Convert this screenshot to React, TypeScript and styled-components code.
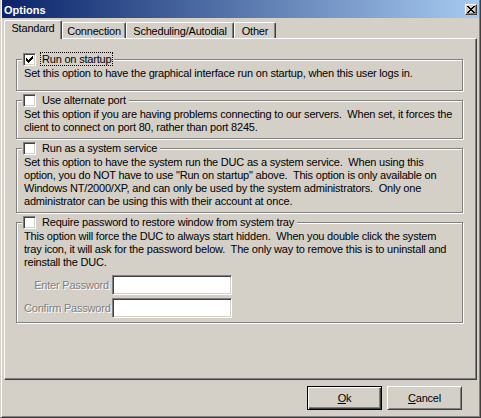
import React from "react";
import styled, { createGlobalStyle } from "styled-components";

const Global = createGlobalStyle`
  html, body { margin: 0; padding: 0; background: #D4D0C8; }
  * { box-sizing: border-box; }
`;

const Window = styled.div`
  width: 481px;
  height: 418px;
  background: #d4d0c8;
  border-left: 1px solid #d4d0c8;
  border-right: 1px solid #404040;
  border-bottom: 1px solid #404040;
  box-shadow: inset 1px 0 0 #ffffff, inset -1px -1px 0 #808080;
  padding: 0 1px 1px 1px;
  display: flex;
  flex-direction: column;
  font-family: "Liberation Sans", Arial, sans-serif;
  font-size: 11px;
  letter-spacing: -0.2px;
  color: #000;
`;

const TitleBar = styled.div`
  height: 18px;
  flex: none;
  display: flex;
  align-items: center;
  justify-content: space-between;
  padding: 0 2px 0 2px;
  background: linear-gradient(to right, #0a246a, #a6caf0);
`;

const Title = styled.span`
  color: #fff;
  font-weight: bold;
  font-size: 11px;
  letter-spacing: 0;
  line-height: 14px;
  padding-top: 1px;
`;

const CloseButton = styled.button`
  width: 12px;
  height: 11px;
  padding: 0;
  margin: 0;
  background: #d4d0c8;
  border: 1px solid;
  border-color: #ffffff #404040 #404040 #ffffff;
  box-shadow: inset -1px -1px 0 #808080;
  display: flex;
  align-items: center;
  justify-content: center;
`;

const Body = styled.div`
  flex: 1;
  display: flex;
  flex-direction: column;
  padding: 2px 2px 0 2px;
`;

const TabStrip = styled.div`
  height: 18px;
  flex: none;
  display: flex;
  align-items: flex-end;
  position: relative;
  z-index: 1;
`;

const Tab = styled.div<{ $active?: boolean; $w: number }>`
  width: ${(p) => p.$w}px;
  height: ${(p) => (p.$active ? 19 : 16)}px;
  margin-bottom: ${(p) => (p.$active ? -1 : 0)}px;
  align-self: ${(p) => (p.$active ? "flex-start" : "flex-end")};
  background: #d4d0c8;
  border-left: 1px solid #ffffff;
  border-top: 1px solid #ffffff;
  border-right: 1px solid #404040;
  border-top-left-radius: 2px;
  border-top-right-radius: 2px;
  box-shadow: inset -1px 0 0 #808080;
  text-align: center;
  line-height: 14px;
  padding-top: ${(p) => (p.$active ? 0 : 1)}px;
  white-space: nowrap;
`;

const Panel = styled.div`
  height: 342px;
  flex: none;
  border-top: 1px solid #ffffff;
  border-left: 1px solid #ffffff;
  border-right: 1px solid #404040;
  border-bottom: 1px solid #404040;
  box-shadow: inset -1px -1px 0 #808080;
  padding: 13px 13px 0 11px;
  display: flex;
  flex-direction: column;
  gap: 2px;
`;

const Group = styled.fieldset<{ $pb: number }>`
  margin: 0;
  min-width: 0;
  padding: 0 8px ${(p) => p.$pb}px 7px;
  border: 1px solid #808080;
  box-shadow: inset 1px 1px 0 #ffffff, 1px 1px 0 #ffffff;
`;

const Legend = styled.legend`
  margin-left: -2px;
  padding: 0 1px;
  background: #d4d0c8;
`;

const LegendRow = styled.span`
  display: inline-flex;
  align-items: center;
  height: 14px;
  vertical-align: top;
`;

const CheckBox = styled.span`
  width: 13px;
  height: 13px;
  flex: none;
  background: #ffffff;
  border: 1px solid;
  border-color: #808080 #ffffff #ffffff #808080;
  box-shadow: inset 1px 1px 0 #404040, inset -1px -1px 0 #d4d0c8;
  display: flex;
  align-items: center;
  justify-content: center;
`;

const CheckLabel = styled.span<{ $focus?: boolean }>`
  margin-left: 4px;
  padding: 0 1px;
  line-height: 12px;
  border: 1px dotted ${(p) => (p.$focus ? "#000" : "transparent")};
  white-space: nowrap;
`;

const Desc = styled.p`
  margin: 1px 0 0 0;
  line-height: 13px;
  white-space: pre;
`;

const PasswordGrid = styled.div`
  margin-top: 6px;
  display: grid;
  grid-template-columns: 85px 120px;
  grid-auto-rows: 20px;
  column-gap: 3px;
  row-gap: 3px;
  align-items: center;
`;

const DisabledLabel = styled.label`
  color: #808080;
  text-shadow: 1px 1px 0 #ffffff;
  text-align: right;
  white-space: nowrap;
`;

const TextInput = styled.input`
  width: 120px;
  height: 20px;
  margin: 0;
  padding: 0 3px;
  background: #ffffff;
  border: 1px solid;
  border-color: #808080 #ffffff #ffffff #808080;
  box-shadow: inset 1px 1px 0 #404040, inset -1px -1px 0 #d4d0c8;
  outline: none;
  font: inherit;
`;

const ButtonRow = styled.div`
  display: flex;
  justify-content: flex-end;
  gap: 5px;
  padding: 6px 15px 0 0;
`;

const DialogButton = styled.button<{ $default?: boolean }>`
  width: 75px;
  height: 24px;
  margin: 0;
  padding: 0;
  background: #d4d0c8;
  color: #000;
  font: inherit;
  letter-spacing: inherit;
  border: 1px solid;
  border-color: ${(p) =>
    p.$default ? "#000000" : "#ffffff #404040 #404040 #ffffff"};
  box-shadow: ${(p) =>
    p.$default
      ? "inset 1px 1px 0 #ffffff, inset -1px -1px 0 #404040, inset -2px -2px 0 #808080"
      : "inset 1px 1px 0 #d4d0c8, inset -1px -1px 0 #808080"};
`;

const Check = () => (
  <svg width="7" height="7" viewBox="0 0 7 7" shapeRendering="crispEdges">
    <path
      fill="#000"
      d="M0 2h1v3H0z M1 3h1v3H1z M2 4h1v3H2z M3 3h1v3H3z M4 2h1v3H4z M5 1h1v3H5z M6 0h1v3H6z"
    />
  </svg>
);

const CloseGlyph = () => (
  <svg width="8" height="7" viewBox="0 0 8 7" shapeRendering="crispEdges">
    <path
      fill="#000"
      d="M0 0h2v1H0z M1 1h2v1H1z M2 2h2v1H2z M3 3h2v1H3z M2 4h2v1H2z M1 5h2v1H1z M0 6h2v1H0z M6 0h2v1H6z M5 1h2v1H5z M4 2h2v1H4z M4 4h2v1H4z M5 5h2v1H5z M6 6h2v1H6z"
    />
  </svg>
);

type Opt = {
  label: string;
  checked?: boolean;
  focus?: boolean;
  pb: number;
  text: string;
  passwords?: boolean;
};

const options: Opt[] = [
  {
    label: "Run on startup",
    checked: true,
    focus: true,
    pb: 10,
    text: "Set this option to have the graphical interface run on startup, when this user logs in.",
  },
  {
    label: "Use alternate port",
    pb: 4,
    text:
      "Set this option if you are having problems connecting to our servers.  When set, it forces the\nclient to connect on port 80, rather than port 8245.",
  },
  {
    label: "Run as a system service",
    pb: 4,
    text:
      'Set this option to have the system run the DUC as a system service.  When using this\noption, you do NOT have to use "Run on startup" above.  This option is only available on\nWindows NT/2000/XP, and can only be used by the system administrators.  Only one\nadministrator can be using this with their account at once.',
  },
  {
    label: "Require password to restore window from system tray",
    pb: 4,
    passwords: true,
    text:
      "This option will force the DUC to always start hidden.  When you double click the system\ntray icon, it will ask for the password below.  The only way to remove this is to uninstall and\nreinstall the DUC.",
  },
];

const tabs = [
  { label: "Standard", w: 58, active: true },
  { label: "Connection", w: 64 },
  { label: "Scheduling/Autodial", w: 108 },
  { label: "Other", w: 42 },
];

export default function App() {
  return (
    <>
      <Global />
      <Window>
        <TitleBar>
          <Title>Options</Title>
          <CloseButton aria-label="Close">
            <CloseGlyph />
          </CloseButton>
        </TitleBar>
        <Body>
          <TabStrip>
            {tabs.map((t) => (
              <Tab key={t.label} $active={t.active} $w={t.w}>
                {t.label}
              </Tab>
            ))}
          </TabStrip>
          <Panel>
            {options.map((o) => (
              <Group key={o.label} $pb={o.pb}>
                <Legend>
                  <LegendRow>
                    <CheckBox>{o.checked && <Check />}</CheckBox>
                    <CheckLabel $focus={o.focus}>{o.label}</CheckLabel>
                  </LegendRow>
                </Legend>
                <Desc>{o.text}</Desc>
                {o.passwords && (
                  <PasswordGrid>
                    <DisabledLabel>Enter Password</DisabledLabel>
                    <TextInput type="password" />
                    <DisabledLabel>Confirm Password</DisabledLabel>
                    <TextInput type="password" />
                  </PasswordGrid>
                )}
              </Group>
            ))}
          </Panel>
          <ButtonRow>
            <DialogButton $default>
              <u>O</u>k
            </DialogButton>
            <DialogButton>
              <u>C</u>ancel
            </DialogButton>
          </ButtonRow>
        </Body>
      </Window>
    </>
  );
}
